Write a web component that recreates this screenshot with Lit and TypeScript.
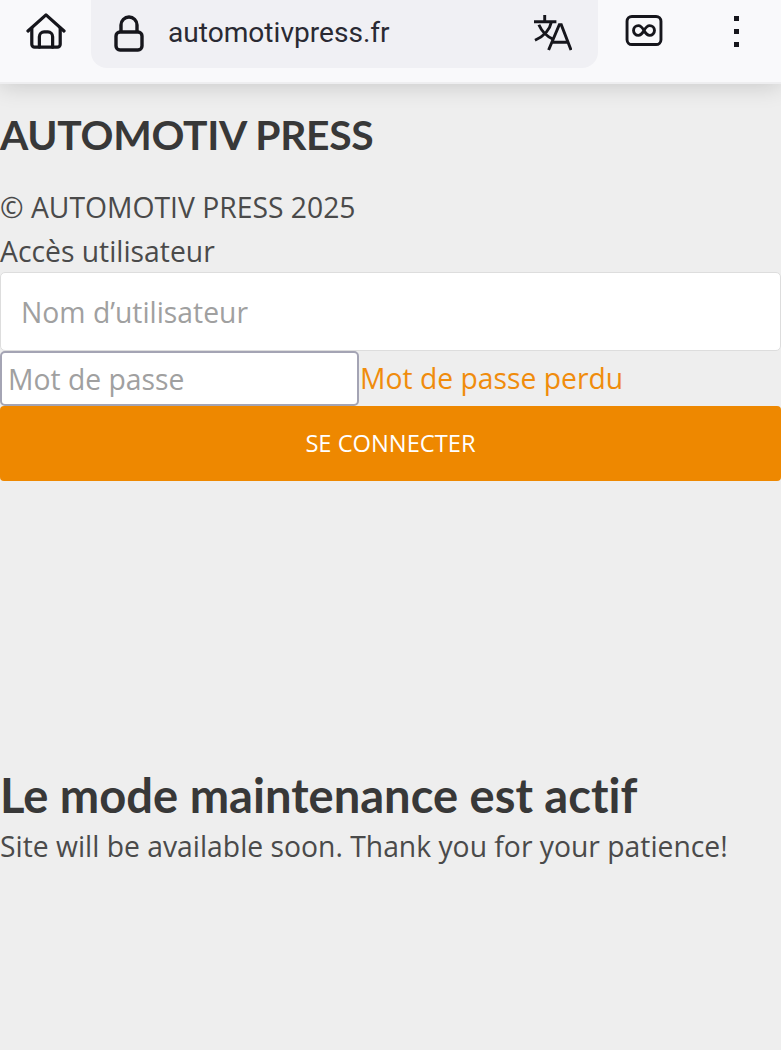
import { LitElement, html, css } from "lit";
import { customElement } from "lit/decorators.js";

@customElement("app-root")
export class AppRoot extends LitElement {
  static styles = css`
    :host { display: block; width: 781px; height: 1050px; background: #eeeeee; overflow: hidden; color: #4a4a4a; font-family: "Open Sans", sans-serif; }
    .bar { height: 82px; box-sizing: border-box; background: #f9f9fb; display: flex; align-items: flex-start; position: relative; box-shadow: 0 2px 0 #eeeef0, 0 4px 22px rgba(0,0,0,.16); }
    .home { width: 91px; height: 62px; display: flex; align-items: center; justify-content: center; }
    .pill { width: 507px; height: 68px; background: #f0f0f4; border-radius: 0 0 16px 16px; display: flex; align-items: center; box-sizing: border-box; padding-left: 23px; }
    .url { font: 400 28.1px/34px Roboto, sans-serif; color: #2a2a33; margin-left: 24px; flex: 1; margin-top: -3px; }
    .tr { margin-right: 26px; margin-top: -4px; display: block; }
    .inf { margin-left: 27px; margin-top: 15px; display: block; }
    .dots { margin-left: 71px; margin-top: 16px; display: block; }
    .lock { display: block; margin-top: -3px; }
    main { display: block; }
    h1 { font: 700 40.8px/48px Lato, sans-serif; font-variant-ligatures: none; letter-spacing: -.3px; margin: 29px 0 0; color: #383838; }
    p { margin: 0; font-size: 28.3px; line-height: 44px; }
    .copy { margin-top: 26px; }
    .user { display: block; width: 100%; height: 79px; box-sizing: border-box; background: #fff; border: 1px solid #dddddd; border-radius: 5px; padding: 0 20px; font: 28.3px "Open Sans", sans-serif; outline: none; margin-top: -1px; }
    .row { display: flex; align-items: center; }
    .pass { width: 359px; height: 55px; box-sizing: border-box; background: #fff; border: 2px solid #a4a4b4; border-radius: 5px; padding: 0 6px; font: 28.3px "Open Sans", sans-serif; outline: none; }
    input::placeholder { color: #a0a0a0; opacity: 1; }
    a { color: #f08c0c; font-size: 28.3px; line-height: 55px; text-decoration: none; margin-left: 1px; }
    button { display: block; width: 100%; height: 75px; border: 0; padding: 0 0 2px; background: #ee8800; border-radius: 4px; color: #fff; font: 23.7px "Open Sans", sans-serif; }
    h2 { font: 700 47.1px/56px Lato, sans-serif; font-variant-ligatures: none; margin: 286px 0 0; color: #383838; }
    .msg { margin-top: 1px; }
  `;
  render() {
    return html`
      <div class="bar">
        <div class="home"><svg width="40" height="36" viewBox="0 0 42 38" fill="none" stroke="#16161c" stroke-width="3.4" stroke-linejoin="round" stroke-linecap="round">
          <path d="M2 19 21 2l19 17"/><path d="M6 16v17a3 3 0 0 0 3 3h24a3 3 0 0 0 3-3V16"/><path d="M14 36V25a5 5 0 0 1 5-5h4a5 5 0 0 1 5 5v11"/></svg></div>
        <div class="pill">
          <svg class="lock" width="30" height="38" viewBox="0 0 30 38" fill="none" stroke="#16161c" stroke-width="3.4"><rect x="2" y="18" width="26" height="18" rx="4"/><path d="M7 18V11a8 8 0 0 1 16 0v7"/></svg>
          <span class="url">automotivpress.fr</span>
          <svg class="tr" width="39" height="37" viewBox="0 0 40 38" fill="none" stroke="#16161c" stroke-width="3"><path d="M1 8h23M12 1v7M19 8c-2 9-8 15-17 19M6 11c3 7 8 12 15 15"/><path d="M16 37 27 11h2l10 26M20 29h15"/></svg>
        </div>
        <svg class="inf" width="38" height="31" viewBox="0 0 38 32" fill="none" stroke="#16161c" stroke-width="3"><rect x="1.500" y="1.500" width="35" height="29" rx="5"/><path d="M19 16c-2-3.500-3.500-5-5.800-5a5 5 0 0 0 0 10C15.500 21 17 19.500 19 16c2-3.500 3.500-5 5.800-5a5 5 0 0 1 0 10C22.500 21 21 19.500 19 16Z"/></svg>
        <svg class="dots" width="6" height="32" viewBox="0 0 6 32" fill="#16161c"><rect x="0" y="0" width="5" height="5"/><rect x="0" y="13" width="5" height="5"/><rect x="0" y="26" width="5" height="5"/></svg>
      </div>
      <main>
        <h1>AUTOMOTIV PRESS</h1>
        <p class="copy">© AUTOMOTIV PRESS 2025</p>
        <p>Accès utilisateur</p>
        <input class="user" placeholder="Nom d’utilisateur" />
        <div class="row"><input class="pass" placeholder="Mot de passe" /><a href="#">Mot de passe perdu</a></div>
        <button>SE CONNECTER</button>
        <h2>Le mode maintenance est actif</h2>
        <p class="msg">Site will be available soon. Thank you for your patience!</p>
      </main>
    `;
  }
}
